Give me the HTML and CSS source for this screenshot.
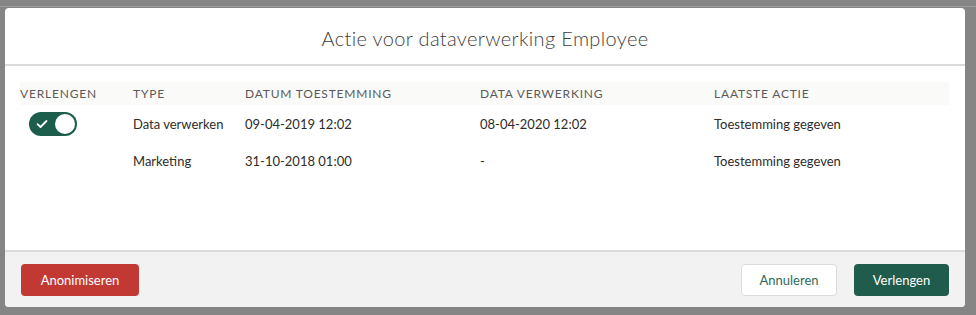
FILE: index.html
```html
<!DOCTYPE html>
<html lang="nl">
<head>
<meta charset="utf-8">
<title>Actie voor dataverwerking Employee</title>
<link rel="stylesheet" href="styles.css">
</head>
<body>
<div class="backdrop">
  <div class="modal">
    <header class="modal-header">
      <h2 class="modal-title">Actie voor dataverwerking Employee</h2>
    </header>
    <div class="modal-body">
      <table class="grid">
        <thead>
          <tr>
            <th class="c1">Verlengen</th>
            <th class="c2">Type</th>
            <th class="c3">Datum toestemming</th>
            <th class="c4">Data verwerking</th>
            <th class="c5">Laatste actie</th>
          </tr>
        </thead>
        <tbody>
          <tr>
            <td class="c1">
              <span class="toggle">
                <svg class="check" width="12" height="10" viewBox="0 0 12 10"><path d="M1.5 5.2 L4.5 8 L10.5 2" fill="none" stroke="#fff" stroke-width="1.8" stroke-linecap="round" stroke-linejoin="round"/></svg>
                <span class="knob"></span>
              </span>
            </td>
            <td>Data verwerken</td>
            <td>09-04-2019 12:02</td>
            <td>08-04-2020 12:02</td>
            <td>Toestemming gegeven</td>
          </tr>
          <tr>
            <td class="c1"></td>
            <td>Marketing</td>
            <td>31-10-2018 01:00</td>
            <td>-</td>
            <td>Toestemming gegeven</td>
          </tr>
        </tbody>
      </table>
    </div>
    <footer class="modal-footer">
      <button class="btn btn-danger">Anonimiseren</button>
      <div class="actions">
        <button class="btn btn-neutral">Annuleren</button>
        <button class="btn btn-brand">Verlengen</button>
      </div>
    </footer>
  </div>
</div>
</body>
</html>
```

FILE: styles.css
```css
html, body {
  margin: 0;
  padding: 0;
}
body {
  background: #858585;
  font-family: "Lato", "Open Sans", sans-serif;
  color: #080707;
}
.backdrop {
  width: 976px;
  height: 315px;
  box-sizing: border-box;
  padding: 8px 11px 8px 5px;
  background: linear-gradient(#858585 0 6px, #9a9a9a 6px 7px, #858585 7px);
}
.modal {
  width: 960px;
  height: 299px;
  background: #fff;
  border-radius: 4px;
  display: flex;
  flex-direction: column;
  overflow: hidden;
}
.modal-header {
  height: 56px;
  border-bottom: 2px solid #dddbda;
  display: flex;
  align-items: center;
  justify-content: center;
}
.modal-title {
  margin: 0;
  font-size: 20px;
  font-weight: 300;
  color: #3e3e3c;
  letter-spacing: 0.35px;
  padding-top: 3px;
}
.modal-body {
  flex: 1;
  padding: 16px 16px 0 15px;
}
.grid {
  width: 929px;
  border-collapse: collapse;
  font-size: 13px;
}
.grid th {
  background: #fafaf9;
  color: #5c5a58;
  font-weight: 400;
  text-transform: uppercase;
  letter-spacing: 0.8px;
  font-size: 12px;
  text-align: left;
  height: 23px;
  padding: 0;
  vertical-align: middle;
}
.grid td {
  padding: 0;
  height: 36px;
  vertical-align: middle;
  color: #2e2c2a;
}
.grid tbody tr:first-child td { height: 38px; }
.c1 { width: 113px; }
.c2 { width: 112px; }
.c3 { width: 235px; }
.c4 { width: 234px; }
.toggle {
  display: flex;
  align-items: center;
  justify-content: space-between;
  box-sizing: border-box;
  width: 48px;
  height: 24px;
  margin-left: 9px;
  border-radius: 12px;
  background: #1d5d4c;
  padding: 0 2px 0 7px;
}
.knob {
  width: 20px;
  height: 20px;
  border-radius: 50%;
  background: #fff;
}
.modal-footer {
  border-top: 2px solid #dddbda;
  background: #f3f2f2;
  height: 57px;
  box-sizing: border-box;
  padding: 12px 16px 11px 16px;
  display: flex;
  justify-content: space-between;
  align-items: flex-start;
}
.actions {
  display: flex;
  gap: 17px;
}
.btn {
  height: 32px;
  border-radius: 4px;
  font-family: "Lato", "Open Sans", sans-serif;
  font-size: 13px;
  padding: 0 16px;
  border: 1px solid transparent;
  cursor: pointer;
}
.btn-danger {
  background: #c23934;
  color: #fff;
  width: 118px;
}
.btn-neutral {
  background: #fff;
  border-color: #dddbda;
  color: #2f6b59;
  width: 96px;
}
.btn-brand {
  background: #1f5c4c;
  color: #fff;
  width: 95px;
}
```
